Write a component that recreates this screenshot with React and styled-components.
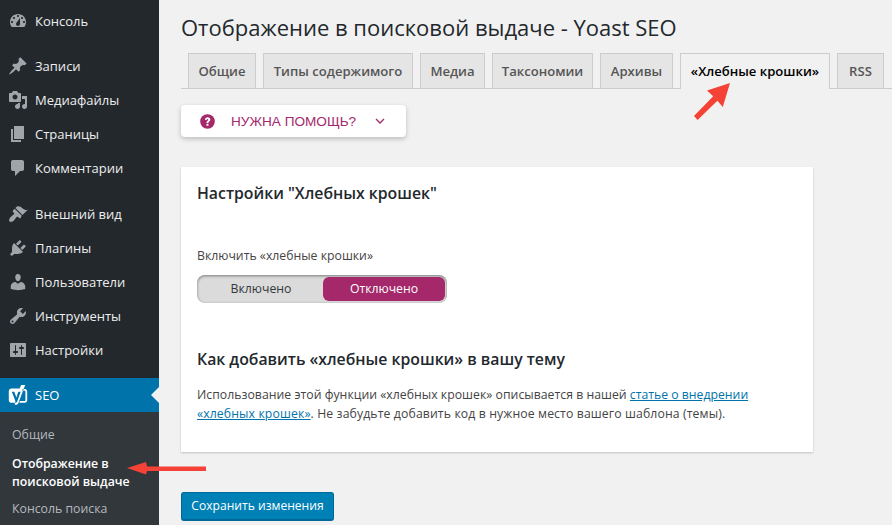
import styled, { createGlobalStyle } from 'styled-components';

const GlobalStyle = createGlobalStyle`
  html, body {
    margin: 0;
    height: 100%;
    overflow: hidden;
    background: #f1f1f1;
    font-family: "Open Sans", "Noto Sans", sans-serif;
  }
  #root { height: 100%; }
`;

const Page = styled.div`
  position: relative;
  display: flex;
  width: 892px;
  height: 525px;
  overflow: hidden;
`;

// Sidebar
const Sidebar = styled.nav`
  flex: 0 0 159px;
  background: #23282d;
  padding-top: 4px;
  display: flex;
  flex-direction: column;
`;

const MenuGroup = styled.div`
  flex-shrink: 0;
  margin-bottom: ${(p) => p.$gap || 0}px;
`;

const MenuItem = styled.div`
  position: relative;
  flex-shrink: 0;
  display: flex;
  align-items: center;
  height: 34px;
  color: ${(p) => (p.$active ? '#fff' : '#eee')};
  background: ${(p) => (p.$active ? '#0073aa' : 'transparent')};
  font-size: 13px;
  line-height: 18px;

  ${(p) =>
    p.$active &&
    `
    &::after {
      content: '';
      position: absolute;
      right: 0;
      top: 9px;
      border: 8px solid transparent;
      border-right-color: #f1f1f1;
      border-left: 0;
    }
  `}
`;

const MenuIcon = styled.svg`
  flex: 0 0 20px;
  width: 20px;
  height: 20px;
  margin: 0 7px 0 8px;
  fill: ${(p) => p.$color || '#a0a5aa'};
`;

const SubMenu = styled.div`
  flex: 1;
  min-height: 0;
  overflow: hidden;
  background: #32373c;
  padding: 14px 12px 0 12px;
  display: flex;
  flex-direction: column;
  font-size: 12.3px;
`;

const SubItem = styled.div`
  flex-shrink: 0;
  color: ${(p) => (p.$current ? '#fff' : '#b4b9be')};
  font-weight: ${(p) => (p.$current ? 600 : 400)};
  line-height: ${(p) => (p.$current ? 17.5 : 18)}px;
  margin-bottom: ${(p) => (p.$current ? 10 : 11)}px;
`;

// Content
const Main = styled.main`
  flex: 1;
  padding-left: 22px;
  min-width: 0;
`;

const Title = styled.h1`
  margin: 0;
  padding-top: 13px;
  height: 40px;
  font-size: 22px;
  line-height: 29px;
  font-weight: 400;
  color: #23282d;
  white-space: nowrap;
`;

const TabBar = styled.div`
  box-sizing: border-box;
  display: flex;
  height: 36px;
  padding-left: 7px;
  border-bottom: 1px solid #ccc;
`;

const Tab = styled.div`
  box-sizing: border-box;
  flex-shrink: 0;
  width: ${(p) => p.$w}px;
  height: ${(p) => (p.$active ? 36 : 35)}px;
  margin-right: 7px;
  border: 1px solid #ccc;
  border-bottom: 0;
  background: ${(p) => (p.$active ? '#f1f1f1' : '#e5e5e5')};
  color: ${(p) => (p.$active ? '#000' : '#555')};
  font-size: 13.1px;
  font-weight: 600;
  line-height: 34px;
  text-align: center;
  white-space: nowrap;
`;

const HelpButton = styled.div`
  display: flex;
  align-items: center;
  width: 225px;
  height: 32px;
  margin-top: 16px;
  background: #fff;
  border-radius: 4px;
  box-shadow: 0 2px 5px rgba(0, 0, 0, 0.22);
  color: #a4286a;
  padding-left: 19px;
  box-sizing: border-box;
`;

const HelpIcon = styled.svg`
  width: 15px;
  height: 15px;
  margin-right: 16px;
  fill: #a4286a;
`;

const HelpLabel = styled.span`
  font-family: "Liberation Sans", Arial, sans-serif;
  font-size: 13.6px;
`;

const Chevron = styled.svg`
  width: 12px;
  height: 12px;
  margin-left: 18px;
  fill: none;
  stroke: #a4286a;
  stroke-width: 1.3;
`;

const Card = styled.section`
  box-sizing: border-box;
  width: 632px;
  height: 285px;
  margin-top: 30px;
  padding: 16px 16px 0;
  background: #fff;
  box-shadow: 0 1px 2px rgba(0, 0, 0, 0.2);
`;

const CardHeading = styled.h2`
  margin: 0;
  font-size: 15.8px;
  line-height: 21px;
  font-weight: 600;
  color: #23282d;
`;

const FieldLabel = styled.div`
  margin-top: 42px;
  font-size: 12.25px;
  line-height: 20px;
  color: #444;
`;

const Toggle = styled.div`
  box-sizing: border-box;
  display: flex;
  width: 250px;
  height: 28px;
  margin-top: 9px;
  padding: 2px;
  background: #dbdbdb;
  border-radius: 8px;
  box-shadow: inset 0 1px 3px rgba(0, 0, 0, 0.45);
  font-size: 12.25px;
`;

const ToggleOption = styled.div`
  width: ${(p) => p.$w}px;
  line-height: 24px;
  text-align: center;
  color: ${(p) => (p.$on ? '#fff' : '#32373c')};
  background: ${(p) => (p.$on ? '#a4286a' : 'transparent')};
  border-radius: 6px;
`;

const SubHeading = styled(CardHeading)`
  margin-top: 46px;
`;

const Paragraph = styled.p`
  margin: 15px 0 0;
  font-size: 12.24px;
  line-height: 19px;
  color: #444;
  white-space: nowrap;
`;

const SpacedText = styled.span`
  letter-spacing: ${(p) => p.$spacing}px;
`;

const TextLink = styled.a`
  color: #0073aa;
  text-decoration: underline;
`;

const SaveButton = styled.button`
  display: block;
  box-sizing: border-box;
  width: 153px;
  height: 29px;
  margin-top: 40px;
  padding: 0;
  border: 1px solid #006799;
  border-bottom-width: 2px;
  border-radius: 3px;
  background: #0081b6;
  color: #fff;
  font-family: inherit;
  font-size: 12.1px;
  line-height: 26px;
`;

// Red annotation arrows lie over the page
const Annotation = styled.svg`
  position: absolute;
  left: 0;
  top: 0;
  width: 892px;
  height: 525px;
  pointer-events: none;
`;

const icons = {
  dashboard:
    'M3.76 16h12.48c1.1-1.37 1.76-3.11 1.76-5 0-4.42-3.58-8-8-8s-8 3.58-8 8c0 1.89.66 3.63 1.76 5zM10 4c.55 0 1 .45 1 1s-.45 1-1 1-1-.45-1-1 .45-1 1-1zM6 6c.55 0 1 .45 1 1s-.45 1-1 1-1-.45-1-1 .45-1 1-1zm8 0c.55 0 1 .45 1 1s-.45 1-1 1-1-.45-1-1 .45-1 1-1zm-5.37 5.55L12 7v6c0 1.1-.9 2-2 2s-2-.9-2-2c0-.57.24-1.08.63-1.45zM4 10c.55 0 1 .45 1 1s-.45 1-1 1-1-.45-1-1 .45-1 1-1zm12 0c.55 0 1 .45 1 1s-.45 1-1 1-1-.45-1-1 .45-1 1-1z',
  post:
    'M10.44 3.02l1.82-1.82 6.36 6.35-1.83 1.82c-1.05-.68-2.48-.57-3.41.36l-.75.75c-.92.93-1.04 2.35-.35 3.41l-1.83 1.82-2.41-2.41-2.8 2.79c-.42.42-3.38 2.71-3.8 2.29s1.86-3.39 2.28-3.81l2.79-2.79L4.1 9.36l1.83-1.82c1.05.69 2.48.57 3.4-.36l.75-.75c.93-.92 1.05-2.35.36-3.41z',
  media:
    'M13 11V4c0-.55-.45-1-1-1h-1.67L9 1H5L3.67 3H2c-.55 0-1 .45-1 1v7c0 .55.45 1 1 1h10c.55 0 1-.45 1-1zM7 4.5c1.38 0 2.5 1.12 2.5 2.5S8.38 9.5 7 9.5 4.5 8.38 4.5 7 5.62 4.5 7 4.5zM14 6h5v10.5c0 1.38-1.12 2.5-2.5 2.5S14 17.88 14 16.5s1.12-2.5 2.5-2.5c.17 0 .34.02.5.05V9h-3V6zm-4 8.05V13h2v3.5c0 1.38-1.12 2.5-2.5 2.5S7 17.88 7 16.5 8.12 14 9.5 14c.17 0 .34.02.5.05z',
  page: 'M6 15V2h10v13H6zm-1 1h8v2H3V5h2v11z',
  comments: 'M5 2h9c1.1 0 2 .9 2 2v7c0 1.1-.9 2-2 2h-2l-5 5v-5H5c-1.1 0-2-.9-2-2V4c0-1.1.9-2 2-2z',
  appearance:
    'M14.48 11.06L7.41 3.99l1.5-1.5c.5-.56 2.3-.47 3.51.32 1.21.8 1.43 1.28 2.91 2.1 1.18.64 2.45 1.26 4.45.85zm-.71.71L6.7 4.7 4.93 6.47c-.39.39-.39 1.02 0 1.41l1.06 1.06c.39.39.39 1.03 0 1.42-.6.6-1.43 1.11-2.21 1.69-.35.26-.7.53-1.01.84-1.34 1.34-2.27 2.91-1.27 4.61 1.7 1 3.27.07 4.61-1.27.31-.31.58-.66.84-1.01.58-.78 1.09-1.61 1.69-2.21.39-.39 1.02-.39 1.41 0l1.06 1.06c.39.39 1.02.39 1.41 0z',
  plugins:
    'M13.11 4.36L9.87 7.6 8 5.73l3.24-3.24c.35-.34 1.05-.2 1.56.32.52.51.66 1.21.31 1.55zm-8 1.77l.91-1.12 9.01 9.01-1.19.84c-.71.71-2.63 1.16-3.82 1.16H6.14L4.9 17.26c-.59.59-1.54.59-2.12 0-.59-.58-.59-1.53 0-2.12l1.24-1.24v-3.88c0-1.13.4-3.19 1.09-3.89zm7.26 3.97l3.24-3.24c.34-.35 1.04-.21 1.55.31.52.51.66 1.21.31 1.55l-3.24 3.25z',
  users:
    'M10 9.25c-2.27 0-2.73-3.44-2.73-3.44C7 4.02 7.82 2 9.97 2c2.16 0 2.98 2.02 2.71 3.81 0 0-.41 3.44-2.68 3.44zm0 2.57L12.72 10c2.39 0 4.52 2.33 4.52 4.53v2.49s-3.65 1.13-7.24 1.13c-3.65 0-7.24-1.13-7.24-1.13v-2.49c0-2.25 1.94-4.48 4.47-4.48z',
  tools:
    'M16.68 9.77c-1.34 1.34-3.3 1.67-4.95.99l-5.41 6.52c-.99.99-2.59.99-3.58 0s-.99-2.59 0-3.57l6.52-5.42c-.68-1.65-.35-3.61.99-4.95 1.28-1.28 3.12-1.62 4.72-1.06l-2.89 2.89 2.82 2.82 2.86-2.87c.53 1.58.18 3.39-1.08 4.65zM3.81 16.21c.4.39 1.04.39 1.43 0 .4-.4.4-1.04 0-1.43-.39-.4-1.03-.4-1.43 0-.39.39-.39 1.03 0 1.43z',
  settings:
    'M18 16V4c0-.55-.45-1-1-1H3c-.55 0-1 .45-1 1v12c0 .55.45 1 1 1h14c.55 0 1-.45 1-1zM8 11h1c.55 0 1 .45 1 1s-.45 1-1 1H8v1.5c0 .28-.22.5-.5.5s-.5-.22-.5-.5V13H6c-.55 0-1-.45-1-1s.45-1 1-1h1V5.5c0-.28.22-.5.5-.5s.5.22.5.5V11zm5-2h-1c-.55 0-1-.45-1-1s.45-1 1-1h1V5.5c0-.28.22-.5.5-.5s.5.22.5.5V7h1c.55 0 1 .45 1 1s-.45 1-1 1h-1v5.5c0 .28-.22.5-.5.5s-.5-.22-.5-.5V9z',
  yoast:
    'M3.5 3.500H11.600L13.200 0H17.200L10.200 18.500C9.700 19.500 8.600 19.900 6.800 19.800V17.800H3.500C2 17.800.8 16.700.8 15.200V6.200C.8 4.700 2 3.500 3.500 3.500zM3.800 6.700L7.200 15.400C7.500 16.200 7.400 17 7 17.800 8.200 17.800 8.900 17.200 9.200 16.400L12.700 6.700H10.300L8.400 12.400 6.300 6.700zM14.800 4.100H16.800C18.200 4.100 19.200 5.200 19.200 6.500V15.300C19.200 16.700 18.200 17.800 16.800 17.800H11.200L11.900 16.100H16.400C17 16.100 17.400 15.700 17.400 15.100V6.700C17.400 6.200 17 5.800 16.400 5.800H14.200z',
};

const topItems = [
  [['dashboard', 'Консоль']],
  [
    ['post', 'Записи'],
    ['media', 'Медиафайлы'],
    ['page', 'Страницы'],
    ['comments', 'Комментарии'],
  ],
  [
    ['appearance', 'Внешний вид'],
    ['plugins', 'Плагины'],
    ['users', 'Пользователи'],
    ['tools', 'Инструменты'],
    ['settings', 'Настройки'],
  ],
];

const groupGaps = [11, 12, 11];

const tabs = [
  { label: 'Общие', w: 68 },
  { label: 'Типы содержимого', w: 150 },
  { label: 'Медиа', w: 65 },
  { label: 'Таксономии', w: 101 },
  { label: 'Архивы', w: 73 },
  { label: '«Хлебные крошки»', w: 150, active: true },
  { label: 'RSS', w: 47 },
];

const App = () => (
  <Page>
    <GlobalStyle />
    <Sidebar>
      {topItems.map((group, i) => (
        <MenuGroup key={i} $gap={groupGaps[i]}>
          {group.map(([icon, label]) => (
            <MenuItem key={label}>
              <MenuIcon viewBox="0 0 20 20">
                <path d={icons[icon]} />
              </MenuIcon>
              {label}
            </MenuItem>
          ))}
        </MenuGroup>
      ))}
      <MenuItem $active>
        <MenuIcon viewBox="0 0 20 20" $color="#fff">
          <path fillRule="evenodd" d={icons.yoast} />
        </MenuIcon>
        SEO
      </MenuItem>
      <SubMenu>
        <SubItem>Общие</SubItem>
        <SubItem $current>
          Отображение в
          <br />
          поисковой выдаче
        </SubItem>
        <SubItem>Консоль поиска</SubItem>
      </SubMenu>
    </Sidebar>

    <Main>
      <Title>Отображение в поисковой выдаче - Yoast SEO</Title>
      <TabBar>
        {tabs.map((t) => (
          <Tab key={t.label} $w={t.w} $active={t.active}>
            {t.label}
          </Tab>
        ))}
      </TabBar>

      <HelpButton>
        <HelpIcon viewBox="0 0 16 16">
          <circle cx="8" cy="8" r="7.8" />
          <path
            d="M5.200 6.200C5.300 4.500 6.600 3.500 8.100 3.500c1.700 0 2.900 1 2.900 2.400 0 1.100-.6 1.700-1.300 2.200-.5.300-.7.600-.7 1v.4H7V8.900c0-.9.400-1.400 1-1.800.5-.3.8-.5.8-1 0-.4-.3-.7-.8-.7-.6 0-.9.400-1 .9zM6.900 10.500H9V12.500H6.900z"
            fill="#fff"
          />
        </HelpIcon>
        <HelpLabel>НУЖНА ПОМОЩЬ?</HelpLabel>
        <Chevron viewBox="0 0 12 12">
          <path d="M2 4l4 4 4-4" />
        </Chevron>
      </HelpButton>

      <Card>
        <CardHeading>Настройки "Хлебных крошек"</CardHeading>
        <FieldLabel>Включить «хлебные крошки»</FieldLabel>
        <Toggle>
          <ToggleOption $w={124}>Включено</ToggleOption>
          <ToggleOption $w={122} $on>
            Отключено
          </ToggleOption>
        </Toggle>
        <SubHeading>Как добавить «хлебные крошки» в вашу тему</SubHeading>
        <Paragraph>
          <SpacedText $spacing={0.03}>Использование этой функции «хлебных крошек» описывается в нашей</SpacedText>{' '}
          <TextLink href="#">статье о внедрении</TextLink>
          <br />
          <SpacedText $spacing={0.12}>
            <TextLink href="#">«хлебных крошек»</TextLink>. Не забудьте добавить код в нужное место вашего шаблона (темы).
          </SpacedText>
        </Paragraph>
      </Card>

      <SaveButton>Сохранить изменения</SaveButton>
    </Main>

    <Annotation viewBox="0 0 892 525">
      <path d="M730 83l-23 7.500 6.200 5.800-19.200 19.800 3.600 3.900 19.800-19.200 5.400 6.200z" fill="#f44336" />
      <path d="M127 468l19-6 1 4.500h59v4.500h-59l-1 3.500z" fill="#f44336" />
    </Annotation>
  </Page>
);

export default App;
